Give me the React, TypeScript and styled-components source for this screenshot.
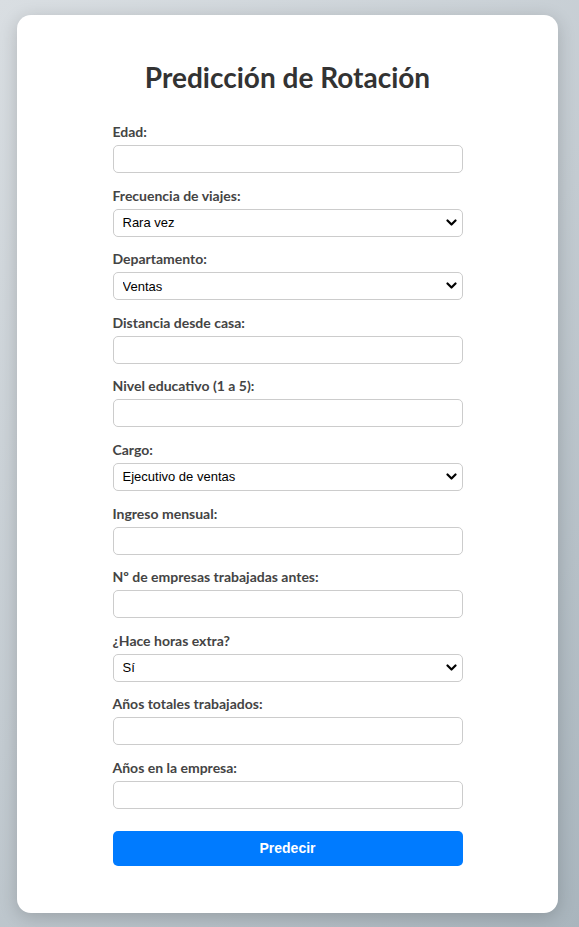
import React from "react";
import styled, { createGlobalStyle } from "styled-components";

const GlobalStyle = createGlobalStyle`
  html, body {
    margin: 0;
    padding: 0;
  }
  body {
    min-height: 927px;
    background: linear-gradient(135deg, #d9dee2 0%, #c3cbd1 50%, #a9b5bd 100%);
    font-family: Lato, "Open Sans", sans-serif;
  }
`;

const Page = styled.div`
  padding: 15px 21px 15px 17px;
`;

const Card = styled.div`
  background: #ffffff;
  border-radius: 14px;
  box-shadow: 0 4px 18px rgba(0, 0, 0, 0.18);
  padding: 44px 20px 47px;
`;

const Title = styled.h2`
  margin: 0 0 28px;
  text-align: center;
  font-size: 28px;
  line-height: 36px;
  font-weight: 700;
  color: #333333;
`;

const Form = styled.form`
  width: 350px;
  margin: 0 auto;
`;

const Field = styled.div`
  margin-bottom: 13.6px;
`;

const Label = styled.label`
  display: block;
  font-size: 14px;
  line-height: 17px;
  font-weight: 700;
  color: #444444;
  margin-bottom: 5px;
`;

const TextInput = styled.input`
  display: block;
  box-sizing: border-box;
  width: 100%;
  height: 28px;
  padding: 4px 8px;
  border: 1px solid #cccccc;
  border-radius: 5px;
  background: #ffffff;
  font-family: "Liberation Sans", Arial, sans-serif;
  font-size: 13px;
  outline: none;
`;

const SelectWrap = styled.div`
  position: relative;
`;

const Select = styled.select`
  display: block;
  box-sizing: border-box;
  width: 100%;
  height: 28px;
  padding: 0 30px 0 9px;
  border: 1px solid #cccccc;
  border-radius: 5px;
  background: #ffffff;
  appearance: none;
  -webkit-appearance: none;
  font-family: "Liberation Sans", Arial, sans-serif;
  font-size: 13px;
  color: #000000;
  outline: none;
`;

const Chevron = styled.svg`
  position: absolute;
  right: 6px;
  top: 9px;
  width: 11px;
  height: 9px;
  pointer-events: none;
`;

const Button = styled.button`
  display: block;
  width: 100%;
  height: 35px;
  margin-top: 22px;
  border: none;
  border-radius: 5px;
  background: #007bff;
  color: #ffffff;
  font-family: "Liberation Sans", Arial, sans-serif;
  font-size: 14px;
  font-weight: 700;
  cursor: pointer;
`;

type FieldDef =
  | { label: string; kind: "input" }
  | { label: string; kind: "select"; value: string };

const fields: FieldDef[] = [
  { label: "Edad:", kind: "input" },
  { label: "Frecuencia de viajes:", kind: "select", value: "Rara vez" },
  { label: "Departamento:", kind: "select", value: "Ventas" },
  { label: "Distancia desde casa:", kind: "input" },
  { label: "Nivel educativo (1 a 5):", kind: "input" },
  { label: "Cargo:", kind: "select", value: "Ejecutivo de ventas" },
  { label: "Ingreso mensual:", kind: "input" },
  { label: "Nº de empresas trabajadas antes:", kind: "input" },
  { label: "¿Hace horas extra?", kind: "select", value: "Sí" },
  { label: "Años totales trabajados:", kind: "input" },
  { label: "Años en la empresa:", kind: "input" },
];

export default function App() {
  return (
    <>
      <GlobalStyle />
      <Page>
        <Card>
          <Title>Predicción de Rotación</Title>
          <Form onSubmit={(e) => e.preventDefault()}>
            {fields.map((f, i) => (
              <Field key={i}>
                <Label>{f.label}</Label>
                {f.kind === "input" ? (
                  <TextInput type="number" />
                ) : (
                  <SelectWrap>
                    <Select defaultValue={f.value}>
                      <option>{f.value}</option>
                    </Select>
                    <Chevron viewBox="0 0 11 9">
                      <path
                        d="M1.5 2.5 L5.5 6.5 L9.5 2.5"
                        fill="none"
                        stroke="#000"
                        strokeWidth="2.2"
                        strokeLinecap="round"
                        strokeLinejoin="round"
                      />
                    </Chevron>
                  </SelectWrap>
                )}
              </Field>
            ))}
            <Button type="submit">Predecir</Button>
          </Form>
        </Card>
      </Page>
    </>
  );
}
